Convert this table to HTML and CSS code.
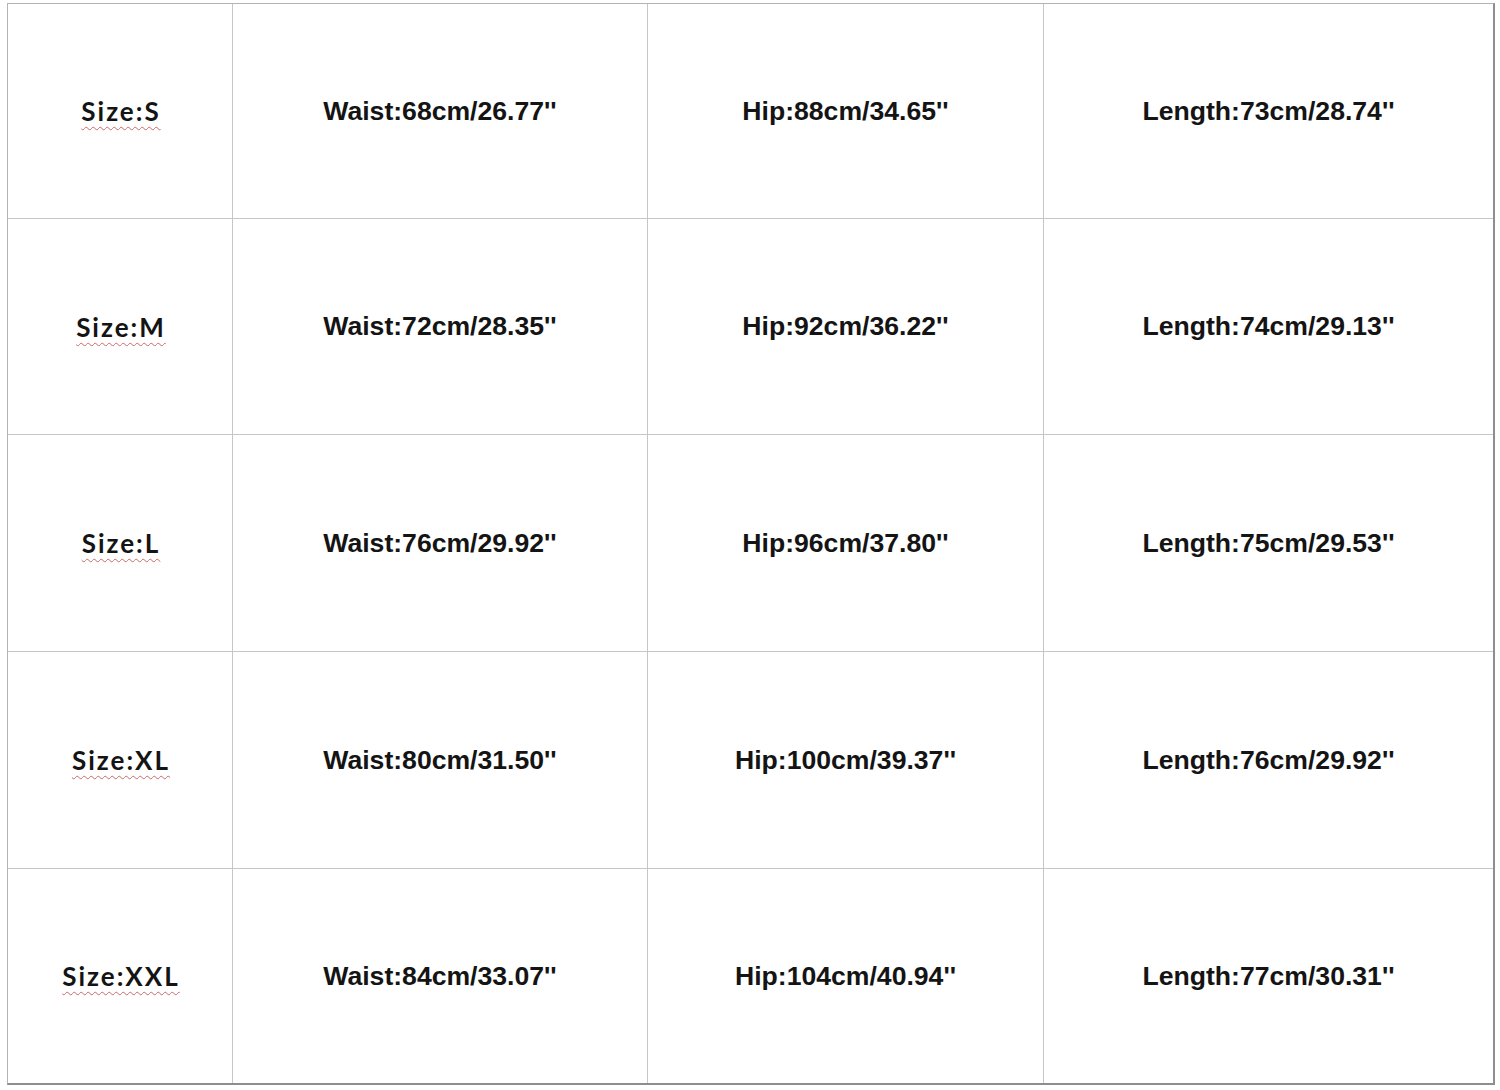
FILE: index.html
```html
<!DOCTYPE html>
<html>
<head>
<meta charset="utf-8">
<link rel="stylesheet" href="styles.css">
</head>
<body>
<div class="chart">
  <div class="cell size"><span>Size:S</span></div>
  <div class="cell">Waist:68cm/26.77''</div>
  <div class="cell">Hip:88cm/34.65''</div>
  <div class="cell last">Length:73cm/28.74''</div>

  <div class="cell size"><span>Size:M</span></div>
  <div class="cell">Waist:72cm/28.35''</div>
  <div class="cell">Hip:92cm/36.22''</div>
  <div class="cell last">Length:74cm/29.13''</div>

  <div class="cell size"><span>Size:L</span></div>
  <div class="cell">Waist:76cm/29.92''</div>
  <div class="cell">Hip:96cm/37.80''</div>
  <div class="cell last">Length:75cm/29.53''</div>

  <div class="cell size"><span>Size:XL</span></div>
  <div class="cell">Waist:80cm/31.50''</div>
  <div class="cell">Hip:100cm/39.37''</div>
  <div class="cell last">Length:76cm/29.92''</div>

  <div class="cell size bottom"><span>Size:XXL</span></div>
  <div class="cell bottom">Waist:84cm/33.07''</div>
  <div class="cell bottom">Hip:104cm/40.94''</div>
  <div class="cell last bottom">Length:77cm/30.31''</div>
</div>
</body>
</html>
```

FILE: styles.css
```css
html, body {
  margin: 0;
  background: #ffffff;
}
body {
  padding: 3px 0 0 7px;
}
.chart {
  display: grid;
  grid-template-columns: 225px 415px 396px 449px;
  grid-template-rows: 215px 216px 217px 217px 214px;
  width: max-content;
  border-top: 1px solid #b4b4b4;
  border-left: 1px solid #b4b4b4;
  border-right: 2px solid #8e8e8e;
  border-bottom: 2px solid #8e8e8e;
}
.cell {
  display: flex;
  align-items: center;
  justify-content: center;
  border-right: 1px solid #c6c6c6;
  border-bottom: 1px solid #c6c6c6;
  font-family: "Liberation Sans", Arial, sans-serif;
  font-weight: bold;
  font-size: 26.6px;
  color: #141414;
  box-sizing: border-box;
}
.cell.last {
  border-right: none;
}
.cell.bottom {
  border-bottom: none;
}
.size span {
  font-family: Lato, "Open Sans", sans-serif;
  font-weight: bold;
  font-size: 26px;
  letter-spacing: 2px;
  margin-right: -2px;
  text-decoration: underline wavy #c86a6a;
  text-decoration-thickness: 1px;
  text-underline-offset: 5px;
}
```
